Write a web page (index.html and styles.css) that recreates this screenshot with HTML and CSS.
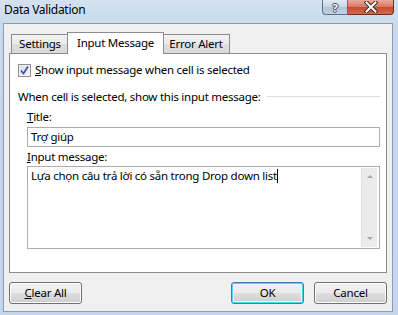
FILE: index.html
```html
<!DOCTYPE html>
<html>
<head>
<meta charset="utf-8">
<link rel="stylesheet" href="styles.css">
</head>
<body>
<div class="window">
  <div class="titlebar">
    <div class="title">Data Validation</div>
    <div class="caption-buttons">
      <div class="cap-btn help"><span class="qmark">?</span></div>
      <div class="cap-btn close">
        <svg width="14" height="12" viewBox="0 0 14 12"><path d="M2.5 1.5 L11.5 10.5 M11.5 1.5 L2.5 10.5" stroke="#3a2a2a" stroke-width="4" stroke-linecap="square"/><path d="M2.5 1.5 L11.5 10.5 M11.5 1.5 L2.5 10.5" stroke="#ffffff" stroke-width="2" stroke-linecap="square"/></svg>
      </div>
    </div>
  </div>
  <div class="client">
    <div class="tabs">
      <div class="tab first">Settings</div>
      <div class="tab selected">Input Message</div>
      <div class="tab last">Error Alert</div>
    </div>
    <div class="panel">
      <div class="check-row">
        <span class="checkbox"><svg width="11" height="11" viewBox="0 0 11 11"><path d="M2 5.5 L4.5 8.5 L9 1.5" fill="none" stroke="#3b5aa8" stroke-width="1.8"/></svg></span>
        <span class="check-label"><u>S</u>how input message when cell is selected</span>
      </div>
      <div class="group-label">
        <span>When cell is selected, show this input message:</span>
        <span class="groove"></span>
      </div>
      <div class="fields">
        <div class="field-label"><u>T</u>itle:</div>
        <div class="input">Trợ giúp</div>
        <div class="field-label msg-label"><u>I</u>nput message:</div>
        <div class="textarea">
          <div class="textarea-text">Lựa chọn câu trả lời có sẵn trong Drop down list<span class="caret"></span></div>
          <div class="scrollbar">
            <span class="arrow up"></span>
            <span class="arrow down"></span>
          </div>
        </div>
      </div>
    </div>
    <div class="buttons">
      <div class="btn"><u>C</u>lear All</div>
      <div class="spacer"></div>
      <div class="btn default">OK</div>
      <div class="btn">Cancel</div>
    </div>
  </div>
</div>
</body>
</html>
```
FILE: styles.css
```css
html, body {
  margin: 0;
  padding: 0;
}
body {
  width: 398px;
  height: 315px;
  overflow: hidden;
  font-family: "Noto Sans", "Open Sans", sans-serif;
  font-size: 11.5px;
  letter-spacing: -0.25px;
  color: #000;
}
.window {
  width: 398px;
  height: 315px;
  display: flex;
  flex-direction: column;
  background: linear-gradient(to bottom, #d3e1f0 0px, #c6d8ec 40px, #c3d6ec 100%);
}
.titlebar {
  height: 23px;
  display: flex;
  justify-content: space-between;
  align-items: flex-start;
  flex: none;
}
.title {
  padding-left: 4px;
  line-height: 20px;
  font-size: 12px;
  letter-spacing: -0.3px;
  color: #000;
}
.caption-buttons {
  display: flex;
  margin-right: 4px;
}
.cap-btn {
  box-sizing: border-box;
  height: 15px;
  border: 1px solid #5c6e86;
  border-top: none;
  display: flex;
  align-items: center;
  justify-content: center;
}
.help {
  width: 26px;
  border-radius: 0 0 0 4px;
  background: linear-gradient(to bottom, #e2e9f2 0%, #c9d5e3 50%, #b4c4d8 51%, #c3d1e2 100%);
}
.qmark {
  color: #fff;
  font-weight: bold;
  font-size: 11px;
  line-height: 13px;
  letter-spacing: 0;
  text-shadow: 1px 0 0 #384a63, -1px 0 0 #384a63, 0 1px 0 #384a63, 0 -1px 0 #384a63;
}
.close {
  width: 46px;
  border-left: none;
  border-radius: 0 0 4px 0;
  border-color: #6f2b20;
  background: linear-gradient(to bottom, #e9a99c 0%, #d9775f 50%, #c74a2f 51%, #d46a4c 100%);
}
.client {
  flex: 1;
  margin: 0 5px 3px 3px;
  border: 1px solid #8b9bb0;
  background: #f0f0f0;
  padding: 8px 5px 0 5px;
  display: flex;
  flex-direction: column;
}
.tabs {
  display: flex;
  align-items: flex-end;
  height: 21px;
  padding-left: 2px;
}
.tab {
  box-sizing: border-box;
  height: 19px;
  border: 1px solid #898c95;
  border-bottom: none;
  background: linear-gradient(to bottom, #f2f2f2 0%, #ebebeb 50%, #dddddd 51%, #d9d9d9 100%);
  text-align: center;
  line-height: 18px;
}
.tab.first {
  width: 58px;
}
.tab.selected {
  width: 97px;
  height: 22px;
  margin: 0 -2px -1px -2px;
  background: #fff;
  line-height: 20px;
  position: relative;
  z-index: 1;
}
.tab.last {
  width: 68px;
}
.panel {
  box-sizing: border-box;
  height: 220px;
  border: 1px solid #898c95;
  background: #fff;
  padding: 0 0 0 8px;
}
.check-row {
  margin-top: 8px;
  height: 16px;
  display: flex;
  align-items: center;
}
.checkbox {
  box-sizing: border-box;
  width: 13px;
  height: 13px;
  border: 1px solid #8e8f8f;
  background: linear-gradient(135deg, #dcdcdc 0%, #f6f6f6 100%);
  box-shadow: inset 0 0 0 1px #f4f4f4;
  display: flex;
  align-items: center;
  justify-content: center;
  margin-right: 4px;
}
.checkbox svg {
  display: block;
}
.check-label, .group-label, .field-label {
  line-height: 16px;
}
.group-label {
  margin-top: 11px;
  display: flex;
  align-items: center;
  padding-right: 6px;
}
.groove {
  flex: 1;
  height: 1px;
  background: #d5dfe5;
  border-bottom: 1px solid #fff;
  margin-left: 6px;
}
.fields {
  margin: 4px 6px 0 9px;
}
.input {
  box-sizing: border-box;
  margin-top: 2px;
  height: 20px;
  border: 1px solid #abadb3;
  padding-left: 3px;
  line-height: 18px;
}
.msg-label {
  margin-top: 2px;
}
.textarea {
  box-sizing: border-box;
  margin-top: 1px;
  height: 83px;
  border: 1px solid #abadb3;
  display: flex;
  padding: 1px 2px 1px 3px;
}
.textarea-text {
  flex: 1;
  line-height: 16px;
}
.caret {
  display: inline-block;
  width: 1px;
  height: 14px;
  background: #000;
  vertical-align: -3px;
}
.scrollbar {
  width: 16px;
  background: #ebebeb;
  border-left: 1px solid #e3e3e3;
  display: flex;
  flex-direction: column;
  justify-content: space-between;
  align-items: center;
  padding: 7px 0 7px;
  box-sizing: border-box;
}
.arrow {
  width: 0;
  height: 0;
  border-left: 3px solid transparent;
  border-right: 3px solid transparent;
}
.arrow.up {
  border-bottom: 3px solid #a8a8a8;
}
.arrow.down {
  border-top: 3px solid #a8a8a8;
}
.buttons {
  margin-top: 9px;
  display: flex;
  gap: 10px;
}
.spacer {
  flex: 1;
}
.btn {
  box-sizing: border-box;
  width: 73px;
  height: 22px;
  border: 1px solid #707070;
  border-radius: 3px;
  background: linear-gradient(to bottom, #f2f2f2 0%, #ebebeb 50%, #dddddd 51%, #cfcfcf 100%);
  box-shadow: inset 0 0 0 1px #fcfcfc;
  text-align: center;
  line-height: 20px;
}
.btn.default {
  border-color: #3c7fb1;
  box-shadow: inset 0 0 0 1px #48d8fb, inset 0 0 0 2px #eaf6fd;
}
```
